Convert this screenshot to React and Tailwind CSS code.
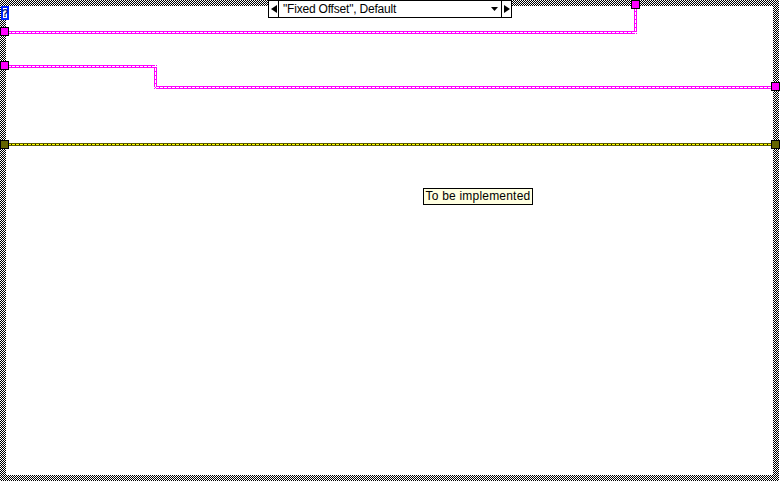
const checker =
  'bg-[repeating-conic-gradient(#000_0_25%,#fff_0_50%)] bg-[length:2px_2px]';

// wire segments as [x, y, w, h] with the 3px band, centre row dashed
function Wire({ segs, outer, inner, gap, id }) {
  return (
    <g>
      <defs>
        <pattern id={`${id}h`} width="4" height="1" patternUnits="userSpaceOnUse">
          <rect width="4" height="1" fill={gap} />
          <rect width="3" height="1" fill={inner} />
        </pattern>
        <pattern id={`${id}v`} width="1" height="4" patternUnits="userSpaceOnUse">
          <rect width="1" height="4" fill={gap} />
          <rect width="1" height="3" fill={inner} />
        </pattern>
      </defs>
      {segs.map(([x, y, w, h], i) => (
        <rect key={`o${i}`} x={x} y={y} width={w} height={h} fill={outer} />
      ))}
      {segs.map(([x, y, w, h], i) =>
        h === 3 ? (
          <rect key={`i${i}`} x={x} y={y + 1} width={w} height="1" fill={`url(#${id}h)`} />
        ) : (
          <rect key={`i${i}`} x={x + 1} y={y} width="1" height={h} fill={`url(#${id}v)`} />
        )
      )}
    </g>
  );
}

function Tunnel({ x, y, fill }) {
  return <rect x={x + 0.5} y={y + 0.5} width="8" height="8" fill={fill} stroke="#000" />;
}

function Diagram() {
  return (
    <svg className="absolute left-0 top-0" width="780" height="482">
      <Wire
        id="p1"
        outer="#ff00ff"
        inner="#ffffff"
        gap="#ff00ff"
        segs={[
          [8, 31, 629, 3],
          [634, 8, 3, 26],
        ]}
      />
      <Wire
        id="p2"
        outer="#ff00ff"
        inner="#ffffff"
        gap="#ff00ff"
        segs={[
          [8, 65, 149, 3],
          [154, 65, 3, 24],
          [154, 86, 618, 3],
        ]}
      />
      <Wire
        id="e1"
        outer="#5e5e00"
        inner="#ffff00"
        gap="#1a1a00"
        segs={[[8, 143, 764, 3]]}
      />
      <Tunnel x={0} y={27} fill="#ff00ff" />
      <Tunnel x={631} y={0} fill="#ff00ff" />
      <Tunnel x={0} y={61} fill="#ff00ff" />
      <Tunnel x={771} y={82} fill="#ff00ff" />
      <Tunnel x={0} y={140} fill="#666600" />
      <Tunnel x={771} y={140} fill="#666600" />
    </svg>
  );
}

export default function App() {
  return (
    <div className="relative w-[780px] h-[482px] bg-white overflow-hidden font-['Liberation_Sans',Arial,sans-serif]">
      <div className={`w-[779px] h-[481px] p-[6px] ${checker}`}>
        <div className="w-full h-full bg-white" />
      </div>

      {/* selector label */}
      <div className="absolute left-[268px] top-0 h-[18px] w-[244px] flex items-stretch border border-black bg-white">
        <div className="w-[9px] flex items-center justify-center">
          <svg width="6" height="8"><path d="M0 4 L6 0 V8 Z" fill="#000" /></svg>
        </div>
        <div className="flex-1 flex items-center border-x border-black pl-[4px] pr-[3px] text-[12px] leading-none tracking-[-0.2px] text-black whitespace-nowrap">
          <span className="flex-1">"Fixed Offset", Default</span>
          <svg width="7" height="4"><path d="M0 0 H7 L3.5 4 Z" fill="#000" /></svg>
        </div>
        <div className="w-[9px] flex items-center justify-center">
          <svg width="6" height="8"><path d="M6 4 L0 0 V8 Z" fill="#000" /></svg>
        </div>
      </div>

      {/* selector terminal */}
      <div className="absolute left-[1px] top-[6px] w-[8px] h-[14px] border-2 border-[#0026ff] bg-white flex items-center justify-center text-[11px] font-bold leading-none text-[#001a80]">
        ?
      </div>

      <Diagram />

      <div className="absolute left-[423px] top-[188px] h-[17px] w-[110px] border border-black bg-[#ffffe1] text-center whitespace-nowrap text-[12px] leading-[15px] tracking-[0.2px] text-black">
        To be implemented
      </div>
    </div>
  );
}
